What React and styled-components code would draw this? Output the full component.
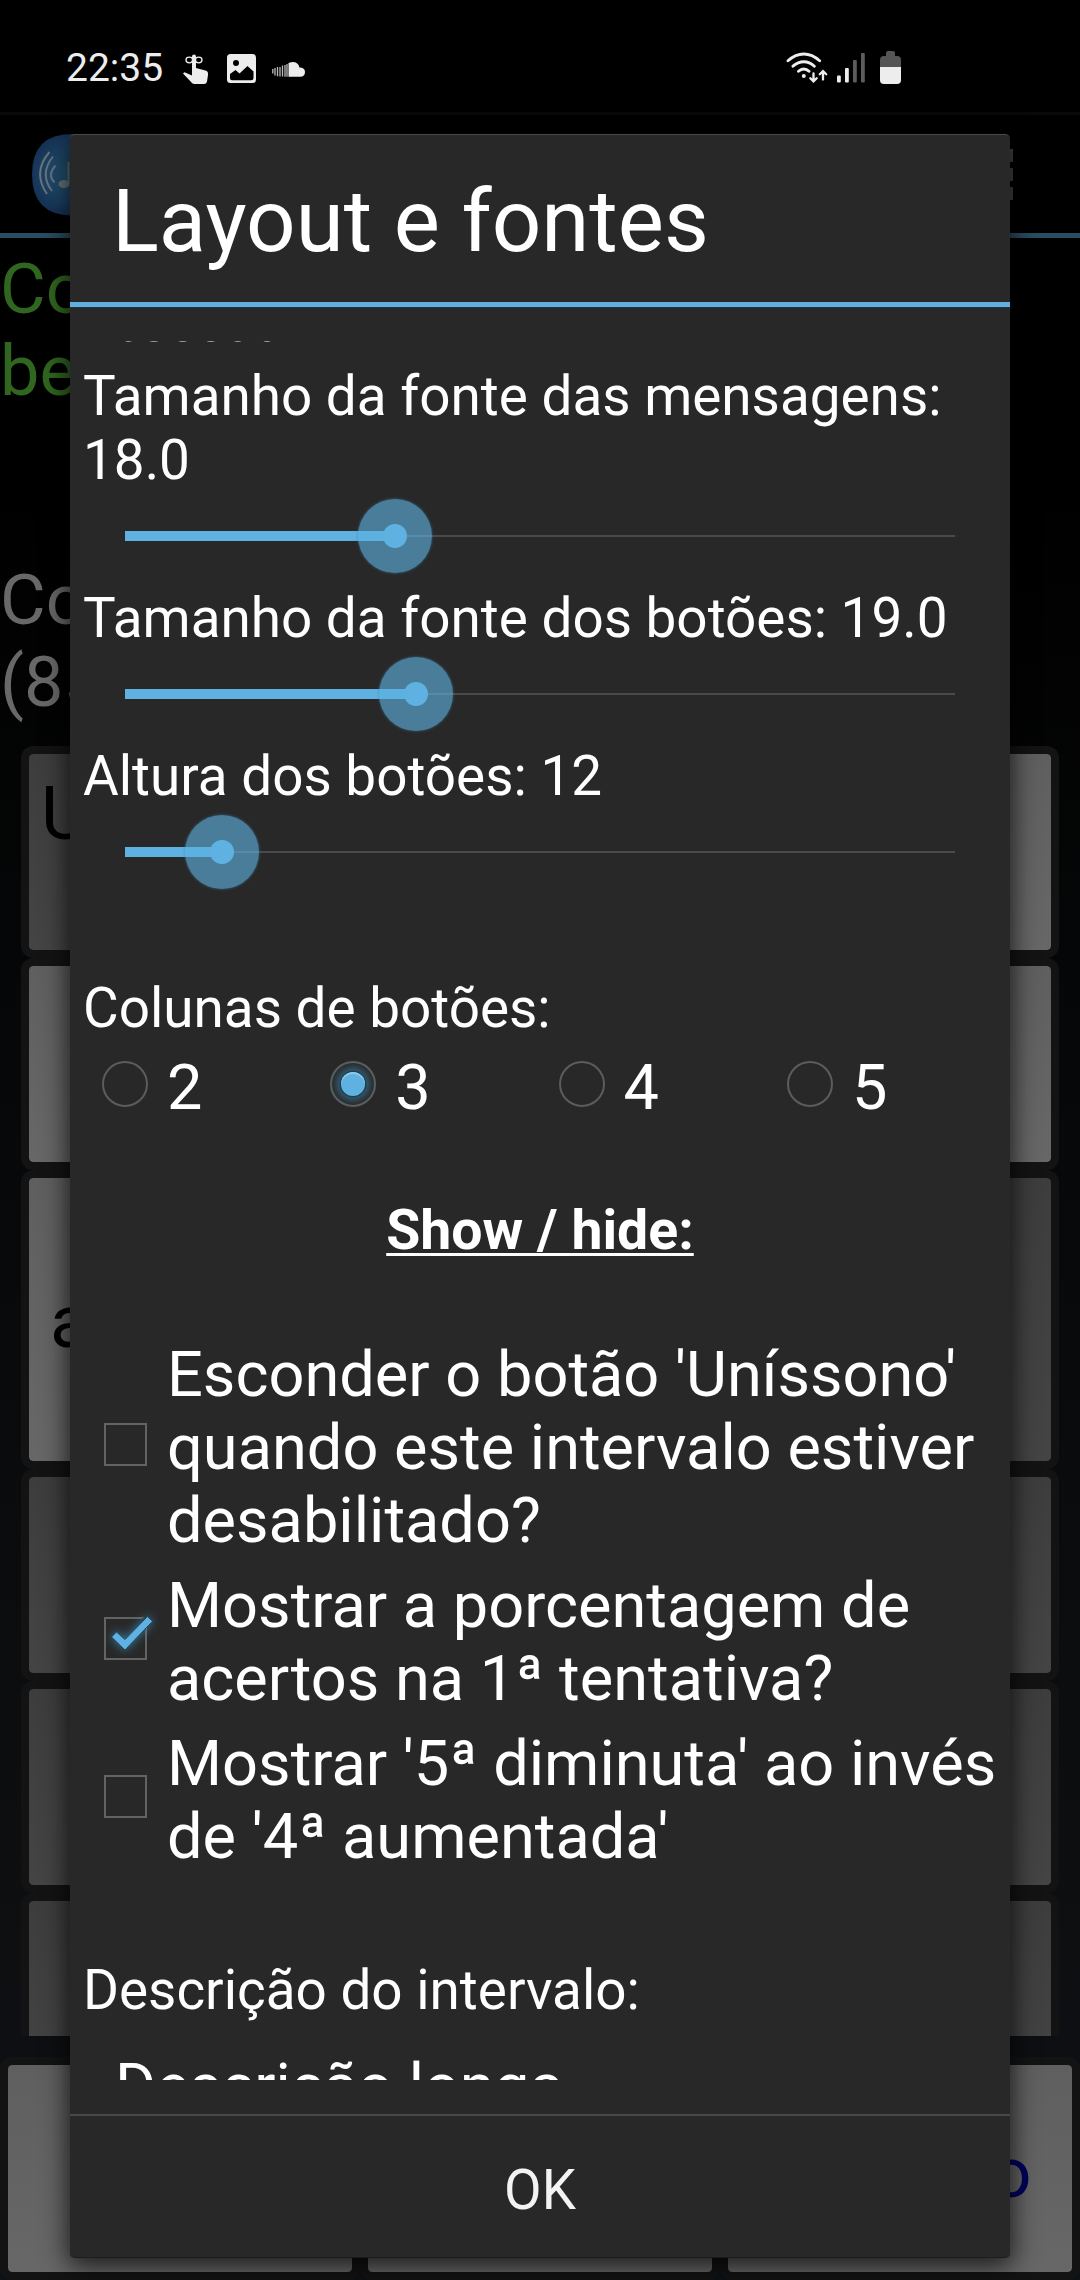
import { useState } from "react";
import styled, { createGlobalStyle, css } from "styled-components";

const App = () => {
  const [columns, setColumns] = useState(3);
  const [checks, setChecks] = useState([false, true, false]);

  const toggle = (index) => {
    setChecks(checks.map((value, i) => (i === index ? !value : value)));
  };

  return (
    <Screen>
      <GlobalStyle />
      <StatusBar />
      <Exercise />
      <Dialog role="dialog">
        <DialogTitle>Layout e fontes</DialogTitle>
        <ScrollArea>
          <Content>
            <ThemeValue>escoat</ThemeValue>
            {sliders.map((slider) => (
              <div key={slider.label}>
                <Label>{slider.label}</Label>
                <Slider value={slider.value} />
              </div>
            ))}
            <Label $top={74}>Colunas de botões:</Label>
            <RadioRow>
              {[2, 3, 4, 5].map((n) => (
                <RadioOption key={n} onClick={() => setColumns(n)}>
                  <RadioCircle>{columns === n && <RadioDot />}</RadioCircle>
                  {n}
                </RadioOption>
              ))}
            </RadioRow>
            <SectionTitle>Show / hide:</SectionTitle>
            {options.map((lines, index) => (
              <CheckRow key={lines[0]} onClick={() => toggle(index)}>
                <CheckBox checked={checks[index]} />
                <CheckText>
                  {lines.map((line) => (
                    <span key={line}>{line}</span>
                  ))}
                </CheckText>
              </CheckRow>
            ))}
            <Label $top={79}>Descrição do intervalo:</Label>
            <SpinnerValue>Descrição longa</SpinnerValue>
          </Content>
        </ScrollArea>
        <OkButton>OK</OkButton>
      </Dialog>
    </Screen>
  );
};

const sliders = [
  { label: "Tamanho da fonte das mensagens: 18.0", value: 32.5 },
  { label: "Tamanho da fonte dos botões: 19.0", value: 35.1 },
  { label: "Altura dos botões: 12", value: 11.7 },
];

const options = [
  ["Esconder o botão 'Uníssono'", "quando este intervalo estiver", "desabilitado?"],
  ["Mostrar a porcentagem de", "acertos na 1ª tentativa?"],
  ["Mostrar '5ª diminuta' ao invés", "de '4ª aumentada'"],
];

const StatusBar = () => (
  <Status>
    <Clock>22:35</Clock>
    <TouchIcon width="26" height="32" viewBox="0 0 26 32">
      <path
        d="M9 3.5a2 2 0 0 1 4 0V15l9.500 2.600Q25.500 18.500 25 22l-1 6.500Q23.500 31 21 31H11.500Q10 31 9 30L0 20.500l1.500-1.300L9 22.500z"
        fill="#ededed"
      />
      <ellipse cx="6.300" cy="7" rx="3.300" ry="2.800" fill="none" stroke="#ededed" strokeWidth="1.300" />
      <ellipse cx="15.700" cy="7" rx="3.300" ry="2.800" fill="none" stroke="#ededed" strokeWidth="1.300" />
    </TouchIcon>
    <PictureIcon width="29" height="29" viewBox="0 0 29 29">
      <rect width="29" height="29" rx="3.500" fill="#ededed" />
      <circle cx="9" cy="9" r="3" fill="#000" />
      <path
        d="M3 20l5.500-4 4 3.500L20.500 12l6 5.500V24q0 2.300-2.300 2.300H5Q3 26.300 3 24z"
        fill="#000"
      />
    </PictureIcon>
    <svg width="33" height="15" viewBox="0 0 33 15">
      <path
        d="M.8 7v4.500M3 6v7.500M5.500 5v9.300M8 5v9.500M10.500 3.500v11M13 3v11.700M15 2v12.700"
        stroke="#bbb"
        strokeWidth="1.300"
      />
      <path
        d="M16.500 1Q19 0 21.500 0q5 .5 6 5.500 5.500 0 5.500 4.500t-5 4.800H16.500z"
        fill="#ededed"
      />
    </svg>
    <Spacer />
    <WifiIcon width="42" height="33" viewBox="0 0 42 33">
      <g fill="none" stroke="#ededed" strokeWidth="2.900" strokeLinecap="round">
        <path d="M2 9.800Q9.500 3 17.800 3t15.800 6.800M7 15.200q5-4.500 10.800-4.500t10.500 4.500M12.500 20.300q2.500-2.300 5.300-2.300t5.200 2.300" />
        <path d="M27.500 22.500v7.500m-3.200-2.800l3.200 3.200 3.200-3.200M37 28.500v-8m-3.200 2.800l3.200-3.200 3.200 3.200" strokeWidth="2.300" />
      </g>
      <circle cx="17.800" cy="25" r="2" fill="#ededed" />
    </WifiIcon>
    <SignalIcon width="28" height="30" viewBox="0 0 28 30">
      <rect y="22.500" width="3.800" height="7" rx="1" fill="#ededed" />
      <rect x="8" y="15" width="3.800" height="14.500" rx="1" fill="#ededed" />
      <rect x="16" y="7" width="3.800" height="22.500" rx="1" fill="#5c5c5c" />
      <rect x="24" y="0" width="3.800" height="29.500" rx="1" fill="#5c5c5c" />
    </SignalIcon>
    <svg width="21" height="33" viewBox="0 0 21 33">
      <path d="M6 5V2q0-2 2-2h5q2 0 2 2v3h2q4 0 4 4v7H0V9q0-4 4-4z" fill="#555" />
      <path d="M0 16h21v13q0 4-4 4H4q-4 0-4-4z" fill="#ededed" />
    </svg>
  </Status>
);

// The exercise screen that stays visible, dimmed, around the dialog
const Exercise = () => (
  <>
    <ActionBar>
      <svg width="81" height="82" viewBox="0 0 81 82">
        <defs>
          <radialGradient id="logo">
            <stop offset="0" stopColor="#24566f" />
            <stop offset=".6" stopColor="#1e466a" />
            <stop offset="1" stopColor="#163456" />
          </radialGradient>
        </defs>
        <path d="M40 0Q0 0 0 40.500T40 81.500 81 40.500 40 0z" fill="url(#logo)" />
        <g fill="none" stroke="#69757b" strokeWidth="2">
          <path d="M17.500 18Q0 38 15 60" />
          <path d="M21 22.500Q7 40 20 57" />
          <path d="M23.500 31.500Q15 41 22.500 48.500" />
        </g>
        <ellipse cx="32" cy="50" rx="5.500" ry="4" fill="#69757b" />
        <path d="M36.500 50V28" stroke="#69757b" strokeWidth="1.700" />
      </svg>
      <Overflow>
        <i />
        <i />
        <i />
      </Overflow>
    </ActionBar>
    <Message $color="#30661f" $height={311}>
      <span>Co</span>
      <span>be</span>
    </Message>
    <Message $color="#686868" $height={197}>
      <span>Co</span>
      <span>(85</span>
    </Message>
    <Answers>
      <Answer $dark $align="flex-start">Uníssono</Answer>
      <Answer />
      <Answer />
      <Answer />
      <Answer $tall>
        <Word>a</Word>
      </Answer>
      <Answer $tall $dark />
      {[4, 5, 6].map((row) => (
        <Row key={row}>
          <Answer $dark />
          <Answer $dark />
        </Row>
      ))}
    </Answers>
    <BottomBar>
      <BottomButton />
      <BottomButton />
      <BottomButton>Próximo</BottomButton>
    </BottomBar>
  </>
);

const Slider = ({ value }) => (
  <Track>
    <TrackFill style={{ width: `${value}%` }} />
    <Thumb style={{ left: `${value}%` }} />
  </Track>
);

const CheckBox = ({ checked }) => (
  <CheckIcon width="60" height="60" viewBox="0 0 60 60">
    <rect x="4" y="9" width="41" height="41" fill="none" stroke="#636363" strokeWidth="2" />
    {checked && (
      <>
        <path d="M39 11l6-4v15z" fill="#282828" />
        <CheckMark d="M10.500 28l5-5 8.500 7.500L46.500 7.500l5 4.800L24 41z" />
      </>
    )}
  </CheckIcon>
);

const GlobalStyle = createGlobalStyle`
  * {
    box-sizing: border-box;
  }

  body {
    margin: 0;
    background: black;
    font-family: Roboto, "Liberation Sans", sans-serif;
  }
`;

const Screen = styled.div`
  position: relative;
  display: flex;
  flex-direction: column;
  width: 1080px;
  height: 2280px;
  overflow: hidden;
  background: linear-gradient(#000 0%, #000 20%, #060708 45%, #0d0f11 85%, #0d1014 100%);
`;

const Status = styled.div`
  display: flex;
  align-items: flex-start;
  height: 115px;
  flex-shrink: 0;
  padding: 51px 179px 0 66px;
  background: black;
  border-bottom: 3px solid #090909;
`;

const Clock = styled.div`
  width: 117px;
  font-size: 39px;
  line-height: 34px;
  color: #ededed;
`;

const TouchIcon = styled.svg`
  margin: 2px 18px 0 0;
`;

const PictureIcon = styled.svg`
  margin: 3px 16px 0 0;

  & + svg {
    margin-top: 11px;
  }
`;

const Spacer = styled.div`
  flex: 1;
`;

const WifiIcon = styled.svg`
  margin-right: 9px;
`;

const SignalIcon = styled.svg`
  margin: 2px 15px 0 0;
`;

const ActionBar = styled.div`
  display: flex;
  justify-content: space-between;
  height: 123px;
  flex-shrink: 0;
  padding: 19px 67px 0 32px;
  border-bottom: 5px solid #294d61;
`;

const Overflow = styled.div`
  display: flex;
  flex-direction: column;
  gap: 6px;
  padding-top: 15px;

  i {
    width: 13px;
    height: 13px;
    background: #444;
  }
`;

const Message = styled.div`
  display: flex;
  flex-direction: column;
  flex-shrink: 0;
  height: ${(props) => props.$height}px;
  padding-top: 10px;
  font-size: 70.2px;
  line-height: 82.3px;
  color: ${(props) => props.$color};
`;

const Answers = styled.div`
  display: grid;
  grid-template-columns: 1fr 1fr;
  align-content: start;
  height: 1290px;
  flex-shrink: 0;
  padding: 0 21px;
  overflow: hidden;
`;

const Row = styled.div`
  display: contents;
`;

const shade = css`
  background: ${(props) =>
    props.$dark
      ? "linear-gradient(#3d3d3d, #444)"
      : "linear-gradient(#5f5f5f, #676767)"};
  background-clip: padding-box;
  border: 8px solid #131313;
  border-radius: 12px;
`;

const Answer = styled.div`
  ${shade}
  display: flex;
  height: ${(props) => (props.$tall ? 299 : 212)}px;
  padding: 0 12px;
  font-size: 74.1px;
  line-height: 86.8px;
  color: black;
  align-items: ${(props) => props.$align || "center"};
  padding-top: ${(props) => (props.$align ? 17 : 0)}px;
`;

const Word = styled.span`
  padding: 6px 0 0 9px;
`;

const BottomBar = styled.div`
  display: flex;
  padding-top: 21px;
`;

const BottomButton = styled.div`
  ${shade}
  display: flex;
  align-items: center;
  justify-content: center;
  width: 360px;
  height: 223px;
  padding-top: 7px;
  font-size: 71px;
  color: #00005c;
`;

const Dialog = styled.div`
  position: absolute;
  left: 70px;
  top: 134px;
  display: flex;
  flex-direction: column;
  width: 940px;
  height: 2124px;
  background: #282828;
  border-top: 1.5px solid #4a4a4a;
  border-bottom: 1px solid #1c1c1c;
  border-radius: 5px;
  box-shadow: 0 6px 26px 2px rgba(0, 0, 0, 0.75);
  color: white;
`;

const DialogTitle = styled.div`
  height: 172px;
  flex-shrink: 0;
  padding: 36px 42px 0;
  border-bottom: 5px solid #62b0de;
  font-size: 87px;
  line-height: 101px;
  box-shadow: 0 1px 0 #1c3444;
`;

const ScrollArea = styled.div`
  height: 1739px;
  flex-shrink: 0;
  margin-top: 34px;
  overflow: hidden;
`;

const Content = styled.div`
  display: flex;
  flex-direction: column;
  margin-top: -58px;
  padding: 0 14px;
`;

const ThemeValue = styled.div`
  height: 81px;
  padding-left: 26px;
  font-size: 62.4px;
  line-height: 73px;
  letter-spacing: -5px;
`;

const Label = styled.div`
  margin: ${(props) => props.$top || 0}px 0 0 -1px;
  font-size: 54.85px;
  line-height: 64px;
`;

const Track = styled.div`
  position: relative;
  height: 88px;
  margin: 0 41px 6px;
  background: linear-gradient(#4a4a4a, #4a4a4a) center / 100% 2px no-repeat;
`;

const TrackFill = styled.div`
  position: absolute;
  left: 0;
  top: 39px;
  height: 10px;
  background: #5eb1e0;
`;

const Thumb = styled.div`
  position: absolute;
  top: 7px;
  width: 74px;
  height: 74px;
  margin-left: -37px;
  border-radius: 50%;
  background: radial-gradient(circle, #5eb1e0 11.5px, transparent 12.5px),
    rgba(94, 177, 224, 0.62);
  box-shadow: 0 0 3px rgba(60, 130, 170, 0.7);
`;

const RadioRow = styled.div`
  display: flex;
  height: 96px;
  padding: 11px 0 0 18px;
`;

const RadioOption = styled.div`
  display: flex;
  flex-shrink: 0;
  width: 228.3px;
  gap: 19px;
  font-size: 63px;
  line-height: 73px;
`;

const RadioCircle = styled.div`
  display: flex;
  align-items: center;
  justify-content: center;
  width: 46px;
  height: 46px;
  margin-top: 10px;
  border: 2px solid #5c5c5c;
  border-radius: 50%;
`;

const RadioDot = styled.div`
  width: 24px;
  height: 24px;
  border-radius: 50%;
  background: #5eb1e0;
  box-shadow: 0 0 0 1.5px #1f3f52, 0 0 9px 4px rgba(70, 150, 195, 0.6),
    inset 0 2px 1px #8ccbed;
`;

const SectionTitle = styled.div`
  margin: 63px 0 69px;
  font-size: 55.4px;
  font-weight: 700;
  line-height: 64px;
  text-align: center;
  text-decoration: underline;
  text-decoration-thickness: 3px;
  text-decoration-skip-ink: none;
  text-underline-offset: 4px;
`;

const CheckRow = styled.div`
  display: flex;
  align-items: center;
  padding: 6px 0 6px 17px;
`;

const CheckIcon = styled.svg`
  flex-shrink: 0;
  margin-bottom: 6px;
  overflow: visible;
`;

const CheckMark = styled.path`
  fill: #5eb1e0;
  stroke: #22495e;
  stroke-width: 1;
  filter: drop-shadow(0 0 5px rgba(70, 160, 210, 0.7));
`;

const CheckText = styled.div`
  display: flex;
  flex-direction: column;
  margin-left: 6px;
  font-size: 63.1px;
  line-height: 73px;
  white-space: nowrap;
`;

const SpinnerValue = styled.div`
  padding: 28px 0 0 31px;
  font-size: 62.6px;
  line-height: 73px;
`;

const OkButton = styled.div`
  flex: 1;
  margin-top: 34px;
  padding-top: 42px;
  border-top: 2px solid #4a4a4a;
  font-size: 54.6px;
  line-height: 64px;
  text-align: center;
  color: #f3f3f3;
`;

export default App;
